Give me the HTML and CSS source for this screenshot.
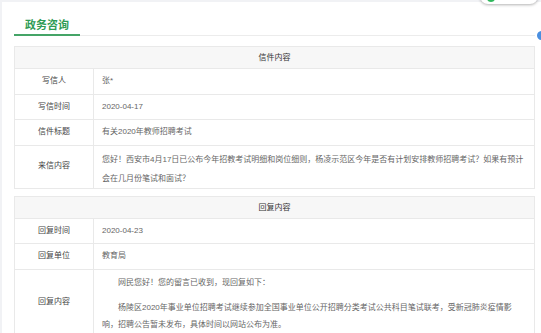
FILE: index.html
```html
<!DOCTYPE html>
<html lang="zh-CN">
<head>
<meta charset="utf-8">
<title>政务咨询</title>
<link rel="stylesheet" href="styles.css">
</head>
<body>
<div class="page">
  <div class="tabs"><span class="tab">政务咨询</span></div>
  <table class="info">
    <tr><th colspan="2" class="head">信件内容</th></tr>
    <tr><td class="label">写信人</td><td class="value">张*</td></tr>
    <tr><td class="label">写信时间</td><td class="value">2020-04-17</td></tr>
    <tr><td class="label">信件标题</td><td class="value">有关2020年教师招聘考试</td></tr>
    <tr><td class="label">来信内容</td><td class="value multi">您好！西安市4月17日已公布今年招教考试明细和岗位细则，杨凌示范区今年是否有计划安排教师招聘考试？如果有预计会在几月份笔试和面试？</td></tr>
  </table>
  <table class="info second">
    <tr><th colspan="2" class="head">回复内容</th></tr>
    <tr><td class="label">回复时间</td><td class="value">2020-04-23</td></tr>
    <tr><td class="label">回复单位</td><td class="value">教育局</td></tr>
    <tr><td class="label">回复内容</td><td class="value reply"><p class="p1">网民您好！您的留言已收到，现回复如下：</p><p class="p2">杨陵区2020年事业单位招聘考试继续参加全国事业单位公开招聘分类考试公共科目笔试联考，受新冠肺炎疫情影响，招聘公告暂未发布，具体时间以网站公布为准。</p></td></tr>
  </table>
</div>
<div class="float-pill"><span class="dot"></span></div>
<div class="float-blue"></div>
</body>
</html>
```
FILE: styles.css
```css
html, body {
  margin: 0;
  padding: 0;
}
body {
  background: #f1f2f5;
  font-family: "Liberation Sans", "Noto Sans CJK SC", sans-serif;
  overflow: hidden;
  height: 333px;
  position: relative;
}
.page {
  margin: 2px 0 0 2px;
  background: #fff;
  padding: 0 6px 20px 12px;
  min-height: 340px;
}
.tabs {
  border-bottom: 1px solid #ececec;
  height: 33px;
}
.tab {
  display: inline-block;
  padding: 15px 11px 1px;
  line-height: 16px;
  font-size: 11px;
  font-weight: bold;
  color: #2f9b55;
  border-bottom: 2px solid #45a467;
}
.info {
  width: 100%;
  border-collapse: collapse;
  margin-top: 10px;
  font-size: 8px;
}
.info.second {
  margin-top: 7px;
}
.info th, .info td {
  border: 1px solid #e9e9e9;
  padding: 0 8px;
}
.head {
  background: #f7f7f7;
  color: #333;
  font-weight: normal;
  line-height: 21.4px;
  padding-top: 1px;
  text-align: center;
}
.label {
  width: 62px;
  text-align: center;
  color: #444;
  line-height: 24.4px;
}
.value {
  color: #666;
  line-height: 24.4px;
  text-align: left;
}
.info td.multi {
  line-height: 19px;
  padding-top: 4px;
  padding-bottom: 0;
}
.info td.reply {
  line-height: 18px;
  padding: 4px 20px 0 8px;
}
.reply p {
  margin: 0;
  text-indent: 2em;
}
.reply .p1 {
  margin-bottom: 7px;
}
.reply .p2 {
  line-height: 17.5px;
}
.float-pill {
  position: absolute;
  top: -20px;
  left: 480px;
  width: 58px;
  height: 24px;
  background: #fff;
  border-radius: 8px;
  box-shadow: 0 1px 3px rgba(0,0,0,0.3);
}
.dot {
  position: absolute;
  left: 7px;
  top: 14px;
  width: 8px;
  height: 8px;
  border-radius: 50%;
  background: #2eb85c;
}
.float-blue {
  position: absolute;
  left: 537px;
  top: 31px;
  width: 9px;
  height: 9px;
  border-radius: 50%;
  background: #4a8fe0;
}
```
